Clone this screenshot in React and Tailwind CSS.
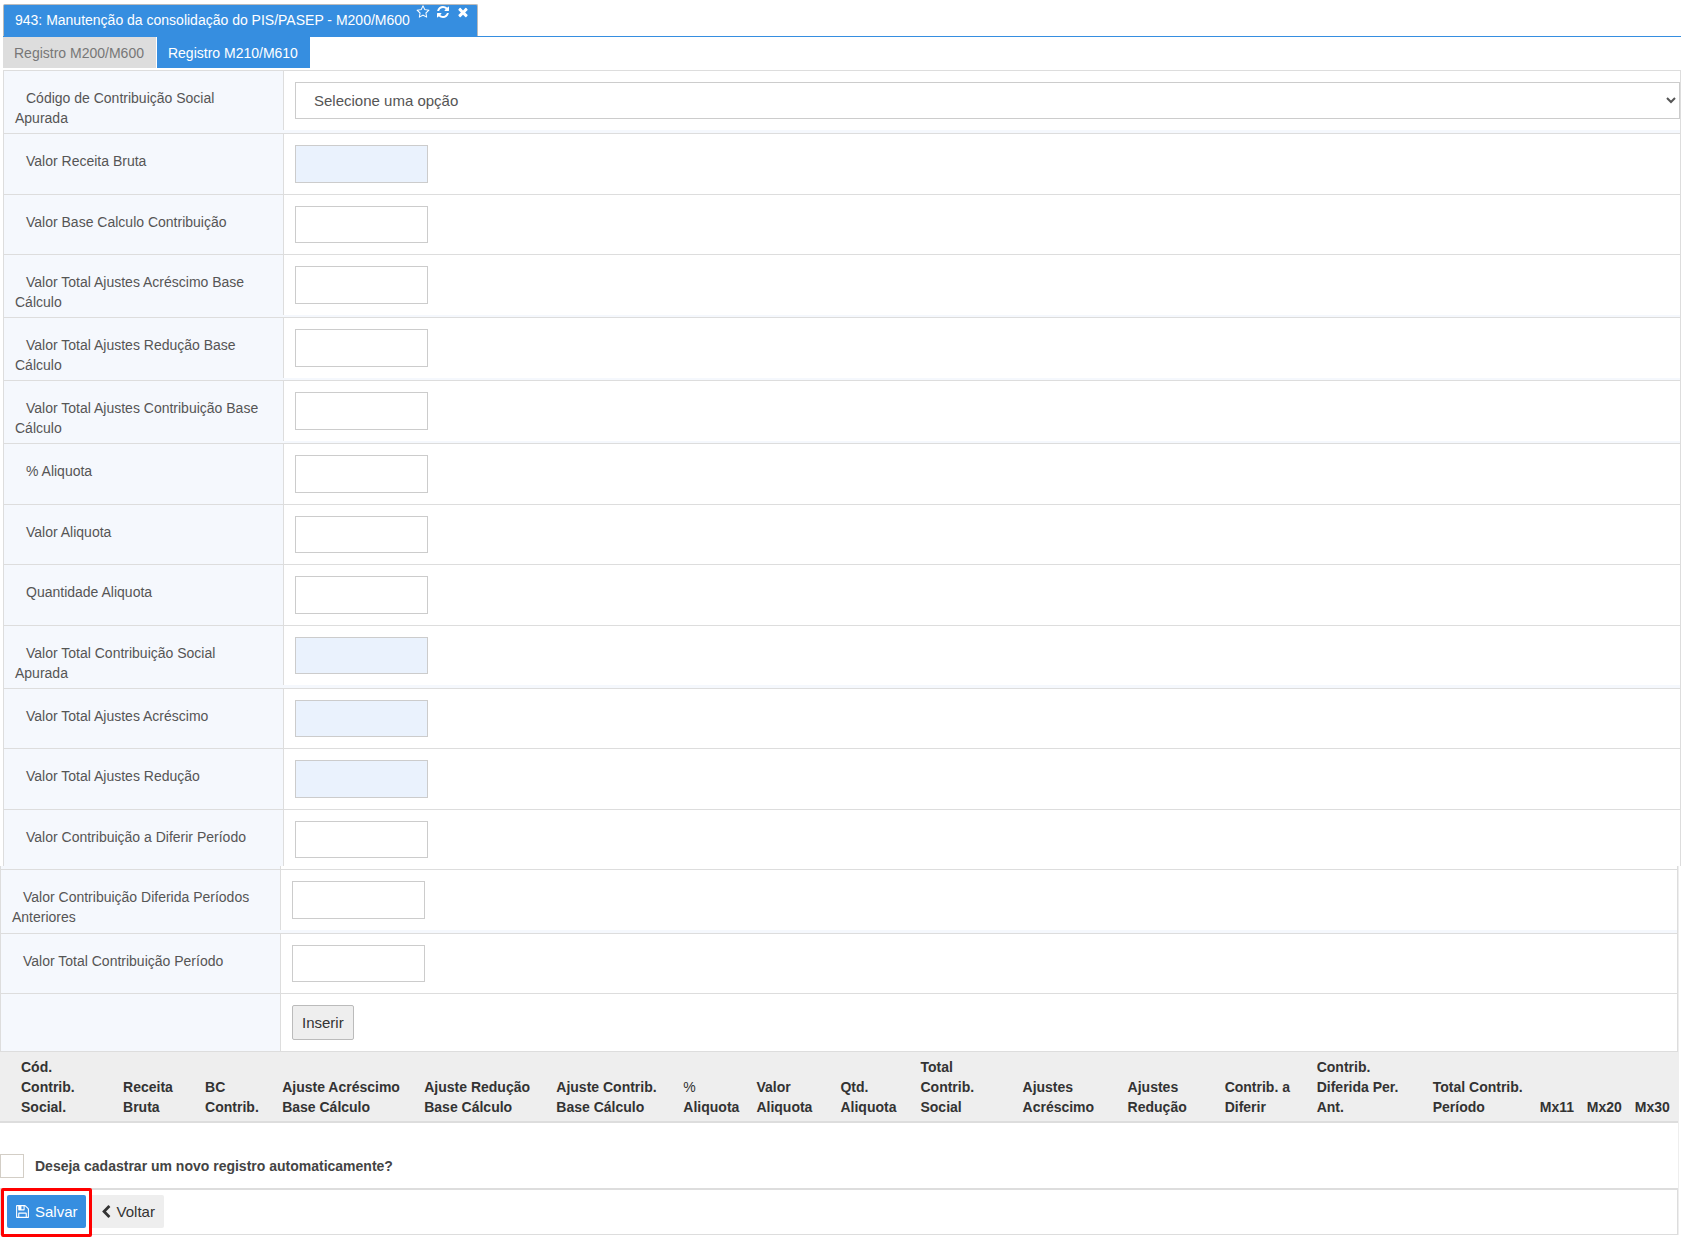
import React from "react";

const ICONS = {
  star: "M1201 1004l306-297-422-62-189-382-189 382-422 62 306 297-73 421 378-199 377 199zm527-357q0 22-26 48l-363 354 86 500q1 7 1 20 0 50-41 50-19 0-40-12l-449-236-449 236q-22 12-40 12-21 0-31.5-14.5t-10.5-35.5q0-6 2-20l86-500-364-354q-25-27-25-48 0-37 56-46l502-73 225-455q19-41 49-41t49 41l225 455 502 73q56 9 56 46z",
  refresh:
    "M1639 1056q0 5-1 7-64 268-268 434.5t-478 166.5q-146 0-282.5-55t-243.5-157l-129 129q-19 19-45 19t-45-19-19-45v-448q0-26 19-45t45-19h448q26 0 45 19t19 45-19 45l-137 137q71 66 161 102t187 36q134 0 250-65t186-179q11-17 53-117 8-23 30-23h192q13 0 22.5 9.5t9.5 22.5zm25-800v448q0 26-19 45t-45 19h-448q-26 0-45-19t-19-45 19-45l138-138q-148-137-349-137-134 0-250 65t-186 179q-11 17-53 117-8 23-30 23h-199q-13 0-22.5-9.5t-9.5-22.5v-7q65-268 270-434.5t480-166.5q146 0 284 55.5t245 156.5l130-129q19-19 45-19t45 19 19 45z",
  times:
    "M1490 1322q0 40-28 68l-136 136q-28 28-68 28t-68-28l-294-294-294 294q-28 28-68 28t-68-28l-136-136q-28-28-28-68t28-68l294-294-294-294q-28-28-28-68t28-68l136-136q28-28 68-28t68 28l294 294 294-294q28-28 68-28t68 28l136 136q28 28 28 68t-28 68l-294 294 294 294q28 28 28 68z",
  save: "M512 1536h768v-384h-768v384zm896 0h128v-896q0-14-10-38.5t-20-34.5l-281-281q-10-10-34-20t-39-10v416q0 40-28 68t-68 28h-576q-40 0-68-28t-28-68v-416h-128v1280h128v-416q0-40 28-68t68-28h832q40 0 68 28t28 68v416zm-384-928v-320q0-13-9.5-22.5t-22.5-9.5h-192q-13 0-22.5 9.5t-9.5 22.5v320q0 13 9.5 22.5t22.5 9.5h192q13 0 22.5-9.5t9.5-22.5zm640 32v928q0 40-28 68t-68 28h-1344q-40 0-68-28t-28-68v-1344q0-40 28-68t68-28h928q40 0 88 20t76 48l280 280q28 28 48 76t20 88z",
  back: "M1427 301l-531 531 531 531q19 19 19 45t-19 45l-166 166q-19 19-45 19t-45-19l-742-742q-19-19-19-45t19-45l742-742q19-19 45-19t45 19l166 166q19 19 19 45t-19 45z",
};

function Icon({ name, className }) {
  return (
    <svg viewBox="0 0 1792 1792" fill="currentColor" className={className} aria-hidden="true">
      <path d={ICONS[name]} />
    </svg>
  );
}

function Row({ id, label, children, last, fieldClass = "pb-[11px]", labelClass = "pb-[5px]" }) {
  return (
    <div className={`flex items-start bg-[#f5f8fd] ${last ? "" : "border-b border-[#ddd]"}`}>
      <label
        htmlFor={id}
        className={`w-[279px] shrink-0 pt-[17px] pr-5 pl-[11px] indent-[11px] leading-5 ${labelClass}`}
      >
        {label}
      </label>
      <div className={`min-w-0 flex-1 border-l border-[#ddd] bg-white pt-[11px] pl-[11px] ${fieldClass}`}>
        {children}
      </div>
    </div>
  );
}

function Field({ id, label, short, filled, ...rest }) {
  return (
    <Row id={id} label={label} {...rest}>
      <input
        id={id}
        type="text"
        readOnly={filled}
        className={`block w-[133px] border border-[#ccc] px-2 ${short ? "h-[37px]" : "h-[38px]"} ${
          filled ? "bg-[#eaf2fd]" : "bg-white"
        }`}
      />
    </Row>
  );
}

const FIELDS = [
  { id: "receita", label: "Valor Receita Bruta", filled: true },
  { id: "base", label: "Valor Base Calculo Contribuição", short: true },
  { id: "acrescimoBase", label: "Valor Total Ajustes Acréscimo Base Cálculo" },
  { id: "reducaoBase", label: "Valor Total Ajustes Redução Base Cálculo" },
  { id: "contribBase", label: "Valor Total Ajustes Contribuição Base Cálculo" },
  { id: "pctAliquota", label: "% Aliquota" },
  { id: "valorAliquota", label: "Valor Aliquota", short: true },
  { id: "qtdAliquota", label: "Quantidade Aliquota" },
  { id: "contribSocial", label: "Valor Total Contribuição Social Apurada", filled: true, short: true },
  { id: "acrescimo", label: "Valor Total Ajustes Acréscimo", filled: true, short: true },
  { id: "reducao", label: "Valor Total Ajustes Redução", filled: true },
  { id: "diferir", label: "Valor Contribuição a Diferir Período", short: true, last: true, fieldClass: "pb-2" },
];

const COLUMNS = [
  ["w-[123px]", "pl-[21px]", "Cód.", "Contrib.", "Social."],
  ["w-[82px]", "", "Receita", "Bruta"],
  ["w-[77px]", "", "BC", "Contrib."],
  ["w-[142px]", "", "Ajuste Acréscimo", "Base Cálculo"],
  ["w-[132px]", "", "Ajuste Redução", "Base Cálculo"],
  ["w-[127px]", "", "Ajuste Contrib.", "Base Cálculo"],
  ["w-[73px]", "", "%", "Aliquota"],
  ["w-[84px]", "", "Valor", "Aliquota"],
  ["w-[80px]", "", "Qtd.", "Aliquota"],
  ["w-[102px]", "", "Total", "Contrib.", "Social"],
  ["w-[105px]", "", "Ajustes", "Acréscimo"],
  ["w-[97px]", "", "Ajustes", "Redução"],
  ["w-[92px]", "", "Contrib. a", "Diferir"],
  ["w-[116px]", "", "Contrib.", "Diferida Per.", "Ant."],
  ["w-[107px]", "", "Total Contrib.", "Período"],
  ["w-[47px]", "", "Mx11"],
  ["w-[48px]", "", "Mx20"],
  ["w-[43px]", "", "Mx30"],
];

export default function App() {
  return (
    <main className="min-h-screen bg-white font-['Liberation_Sans',Arial,sans-serif] text-sm text-[#555]">
      <div className="px-[3px] pt-1">
        <header className="flex border-b border-[#368ee0]">
          <div className="flex h-8 items-start rounded-t-xs border border-b-0 border-[#bbb] bg-[#368ee0] pr-[7px] pl-[11px] text-white">
            <h1 className="pt-[5px] leading-5">943: Manutenção da consolidação do PIS/PASEP - M200/M600</h1>
            <div className="flex gap-[6px] pl-[6px]">
              <button type="button" aria-label="Favorito">
                <Icon name="star" className="size-[14px]" />
              </button>
              <button type="button" aria-label="Atualizar">
                <Icon name="refresh" className="size-[14px]" />
              </button>
              <button type="button" aria-label="Fechar">
                <Icon name="times" className="size-[14px]" />
              </button>
            </div>
          </div>
        </header>
        <nav className="flex gap-px">
          <button type="button" className="h-[31px] bg-[#ddd] pr-3 pl-[11px] text-[#777]">
            Registro M200/M600
          </button>
          <button type="button" className="h-[31px] bg-[#368ee0] pr-3 pl-[11px] text-white">
            Registro M210/M610
          </button>
        </nav>
        <section className="mt-[2px] border border-b-0 border-[#ddd]">
          <Row id="codigo" label="Código de Contribuição Social Apurada">
            <select
              id="codigo"
              className="block h-[37px] w-full border border-[#ccc] bg-white pr-[2px] pl-[14px] text-[15px]"
            >
              <option>Selecione uma opção</option>
            </select>
          </Row>
          {FIELDS.map((f) => (
            <Field key={f.id} {...f} />
          ))}
        </section>
      </div>

      <div className="mr-[5px] border-r border-[#eee]">
        <section className="border border-t-0 border-[#ddd]">
          <div className="flex h-1 border-b border-[#ddd]">
            <div className="w-[279px] bg-[#f5f8fd]" />
            <div className="flex-1 border-l border-[#ddd]" />
          </div>
          <Field id="diferida" label="Valor Contribuição Diferida Períodos Anteriores" labelClass="pb-[6px]" />
          <Field id="totalPeriodo" label="Valor Total Contribuição Período" short />
          <Row label="" last>
            <button
              type="button"
              className="block h-[35px] rounded-xs border border-[#bbb] bg-[#eee] px-[9px] text-[15px] text-[#333]"
            >
              Inserir
            </button>
          </Row>
        </section>

        <table className="w-full table-fixed border-collapse">
          <thead>
            <tr className="border-b-2 border-[#ddd] bg-[#eee] text-left align-bottom leading-5 text-[#333]">
              {COLUMNS.map(([width, pad, ...lines]) => (
                <th key={lines.join(" ")} scope="col" className={`pt-[5px] pb-1 whitespace-nowrap ${width} ${pad}`}>
                  {lines.map((line) => (
                    <span key={line} className={line === "%" ? "block font-normal" : "block"}>
                      {line}
                    </span>
                  ))}
                </th>
              ))}
            </tr>
          </thead>
        </table>

        <div className="mt-[31px] flex items-center gap-[11px]">
          <input id="auto" type="checkbox" className="size-6 appearance-none border border-[#d3cec6] bg-white" />
          <label htmlFor="auto" className="leading-5 font-bold text-[#444]">
            Deseja cadastrar um novo registro automaticamente?
          </label>
        </div>

        <footer className="mt-[10px] flex h-[47px] items-start gap-1 border border-t-2 border-[#ddd] pt-[5px] pl-[6px]">
          <div className="relative">
            <button
              type="button"
              className="flex h-[33px] items-center gap-[5px] rounded-xs bg-[#368ee0] px-2 text-[15px] text-white"
            >
              <Icon name="save" className="size-[15px]" />
              Salvar
            </button>
            <div className="pointer-events-none absolute -inset-x-[6px] -top-[7px] -bottom-[9px] rounded-xs border-3 border-[#f00]" />
          </div>
          <button
            type="button"
            className="flex h-[33px] items-center gap-1 rounded-xs bg-[#eee] px-[9px] text-[15px] text-[#333]"
          >
            <Icon name="back" className="size-[14px]" />
            Voltar
          </button>
        </footer>
      </div>
    </main>
  );
}
